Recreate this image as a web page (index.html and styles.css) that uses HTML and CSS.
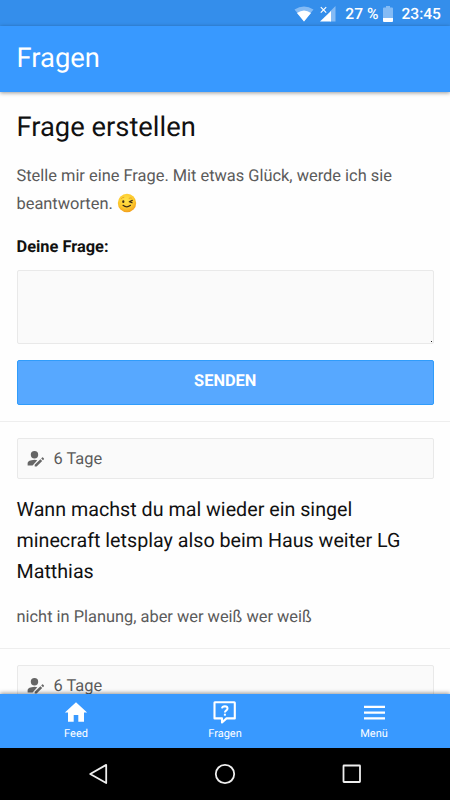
FILE: index.html
```html
<!DOCTYPE html>
<html lang="de">
<head>
<meta charset="utf-8">
<title>Fragen</title>
<link rel="stylesheet" href="styles.css">
</head>
<body>
<div class="status">
  <svg class="wifi" width="20" height="16" viewBox="0 0 20 16"><path d="M0.500 3.500Q10-2.500 19.500 3.500L10 15.500Z" fill="#84bbf5"/><path d="M3 7Q10 2 17 7L10 15.500Z" fill="#fff"/></svg>
  <svg class="signal" width="16" height="16" viewBox="0 0 16 16"><path d="M10 5.500L15.500 0V15.500H10Z" fill="#84bbf5"/><path d="M0 15.500L11 5V15.500Z" fill="#fff"/><path d="M.8 1.200L6.200 6.600M6.200 1.200L.8 6.600" stroke="#fff" stroke-width="1.200"/></svg>
  <span class="percent">27 %</span>
  <svg class="battery" width="10" height="16" viewBox="0 0 10 16"><path d="M3 0H7V1.500H9Q10 1.500 10 2.500V12H0V2.500Q0 1.500 1 1.500H3Z" fill="#84bbf5"/><path d="M0 12H10V15Q10 16 9 16H1Q0 16 0 15Z" fill="#fff"/></svg>
  <span class="clock">23:45</span>
</div>
<header class="header">Fragen</header>
<main class="content">
  <section class="form">
    <h1>Frage erstellen</h1>
    <p class="intro">Stelle mir eine Frage. Mit etwas Glück, werde ich sie beantworten. <svg class="wink" width="20" height="20" viewBox="0 0 20 20"><defs><radialGradient id="face" cx=".45" cy=".35" r=".65"><stop offset="0" stop-color="#ffe34b"/><stop offset=".65" stop-color="#fdc92d"/><stop offset="1" stop-color="#f2a01d"/></radialGradient></defs><circle cx="10" cy="10" r="9.200" fill="url(#face)"/><ellipse cx="6.300" cy="8.700" rx="1.100" ry="1.400" fill="#3b2a16"/><path d="M15.300 7.400L12.300 8.700L15.100 9.700M6 12.300Q9.800 15.300 13.500 12.300" fill="none" stroke="#3b2a16" stroke-width="1.200" stroke-linecap="round" stroke-linejoin="round"/><path d="M4.200 5.800Q5.500 4.200 7.200 4.300M11.800 5.500Q13.300 4.600 14.800 5.200" fill="none" stroke="#dd9a20" stroke-width=".8"/></svg></p>
    <div class="label">Deine Frage:</div>
    <div class="field"></div>
    <div class="send">SENDEN</div>
  </section>
  <article class="entry">
    <div class="meta"><svg class="author" width="18" height="18" viewBox="0 0 18 18"><circle cx="7.500" cy="4.700" r="3.700"/><path d="M.6 15.500V13Q1 10.300 7.500 9.800Q8.800 9.800 10.300 10.200L5.600 15.500Z"/><path d="M7.700 16.600V14.700L13.400 9.200L15.200 11L9.600 16.600ZM14.200 8.400L15.100 7.500Q15.500 7.100 16 7.500L16.900 8.400Q17.300 8.800 16.900 9.300L16 10.200Z"/></svg><span>6 Tage</span></div>
    <h2>Wann machst du mal wieder ein singel minecraft letsplay also beim Haus weiter LG Matthias</h2>
    <p class="answer">nicht in Planung, aber wer weiß wer weiß</p>
  </article>
  <article class="entry">
    <div class="meta"><svg class="author" width="18" height="18" viewBox="0 0 18 18"><circle cx="7.500" cy="4.700" r="3.700"/><path d="M.6 15.500V13Q1 10.300 7.500 9.800Q8.800 9.800 10.300 10.200L5.600 15.500Z"/><path d="M7.700 16.600V14.700L13.400 9.200L15.200 11L9.600 16.600ZM14.200 8.400L15.100 7.500Q15.500 7.100 16 7.500L16.900 8.400Q17.300 8.800 16.900 9.300L16 10.200Z"/></svg><span>6 Tage</span></div>
  </article>
</main>
<nav class="tabs">
  <div class="tab"><svg width="28" height="26" viewBox="0 0 28 26"><path d="M14 2.300L25.100 12.600H22V21.800H16.300V15H11.700V21.800H6V12.600H2.900Z" fill="#fff"/></svg><span>Feed</span></div>
  <div class="tab"><svg width="28" height="26" viewBox="0 0 28 26"><path d="M4.200 2.200H23.300Q23.800 2.200 23.800 2.700V18.400H15.500L11 22.500V18.400H3.500V2.700Q3.500 2.200 4.200 2.200Z" fill="none" stroke="#fff" stroke-width="2.100" stroke-linejoin="round"/><path d="M11 8.400Q11.300 6.200 13.900 6.200Q16.500 6.300 16.500 8.400Q16.500 9.500 15.300 10.300Q13.900 11.200 13.900 12.600" fill="none" stroke="#fff" stroke-width="2"/><path d="M12.900 13.700H14.900V15.700H12.900Z" fill="#fff"/></svg><span>Fragen</span></div>
  <div class="tab"><svg width="28" height="26" viewBox="0 0 28 26"><path d="M4 6.900H25M4 12.600H25M4 18.400H25" stroke="#fff" stroke-width="2.300"/></svg><span>Menü</span></div>
</nav>
<div class="system">
  <svg width="24" height="24" viewBox="0 0 24 24"><path d="M20.200 2.900V21L4.200 12Z"/></svg>
  <svg width="24" height="24" viewBox="0 0 24 24"><circle cx="12" cy="12" r="9.200"/></svg>
  <svg width="24" height="24" viewBox="0 0 24 24"><rect x="3.500" y="3.500" width="16.500" height="16.500" rx=".5"/></svg>
</div>
</body>
</html>
```
FILE: styles.css
```css
* { box-sizing: border-box; }
body {
  margin: 0;
  width: 450px;
  height: 800px;
  overflow: hidden;
  display: flex;
  flex-direction: column;
  font-family: Roboto, sans-serif;
  background: #fefefe;
  text-rendering: geometricPrecision;
}
h1, h2, p { margin: 0; font-weight: 400; }
svg { display: block; flex: none; }
.status {
  flex: none;
  height: 26px;
  padding: 1px 9px 0 0;
  display: flex;
  justify-content: flex-end;
  align-items: center;
  background: #348eeb;
  color: #fff;
  font-size: 15.6px;
  font-weight: 500;
}
.wifi { margin-right: 6px; }
.signal { margin-right: 9px; }
.battery { margin: 0 8px 0 5px; }
.header {
  flex: none;
  height: 66px;
  padding-left: 16.5px;
  line-height: 64px;
  background: #3899ff;
  color: #fff;
  font-size: 27.4px;
  box-shadow: 0 1px 4px rgba(0, 0, 0, .4);
  z-index: 1;
}
.content { flex: 1; min-height: 0; overflow: hidden; }
.form { padding: 16px 16px 16px 16.5px; }
h1 { font-size: 27.35px; line-height: 38px; color: #111; }
.intro, .answer { font-size: 16.4px; line-height: 28px; color: #5a5a5a; }
.intro { margin-top: 17px; }
.wink { display: inline-block; vertical-align: -4px; }
.label { margin-top: 15px; font-size: 16.4px; line-height: 28px; font-weight: 700; color: #111; }
.field {
  position: relative;
  height: 74px;
  margin-top: 8px;
  border: 1px solid #e9e9e9;
  border-radius: 2px;
  background: #fafafa;
}
.field::after {
  content: "";
  position: absolute;
  right: 1px;
  bottom: 1px;
  width: 1px;
  height: 1px;
  background: #222;
}
.send {
  height: 45px;
  margin-top: 16px;
  border: 1px solid #309cfb;
  border-radius: 2px;
  background: #57a8ff;
  color: #fff;
  font-size: 16.4px;
  line-height: 42px;
  font-weight: 700;
  text-align: center;
}
.entry { padding: 16px 16px 16px 16.5px; border-top: 1px solid #eee; }
.meta {
  height: 41px;
  padding-left: 9px;
  display: flex;
  align-items: center;
  gap: 9px;
  border: 1px solid #e9e9e9;
  border-radius: 2px;
  background: #fafafa;
  color: #5a5a5a;
  font-size: 16.4px;
}
.meta span { padding-top: 1px; }
.author { fill: #666; }
h2 { margin-top: 15px; font-size: 19.7px; line-height: 31px; color: #111; }
.answer { margin-top: 17px; }
.tabs {
  flex: none;
  height: 54px;
  display: grid;
  grid-template-columns: repeat(3, 149px);
  padding-left: 1.5px;
  background: #3899ff;
  color: #fff;
  box-shadow: 0 -1px 4px rgba(0, 0, 0, .4);
  z-index: 1;
}
.tab {
  padding-top: 6px;
  display: flex;
  flex-direction: column;
  align-items: center;
  font-size: 11px;
  line-height: 15px;
}
.system {
  flex: none;
  height: 52px;
  display: flex;
  justify-content: center;
  align-items: center;
  gap: 103px;
  background: #000;
  z-index: 1;
}
.system svg { fill: none; stroke: #eee; stroke-width: 1.8; stroke-linejoin: round; }
```
